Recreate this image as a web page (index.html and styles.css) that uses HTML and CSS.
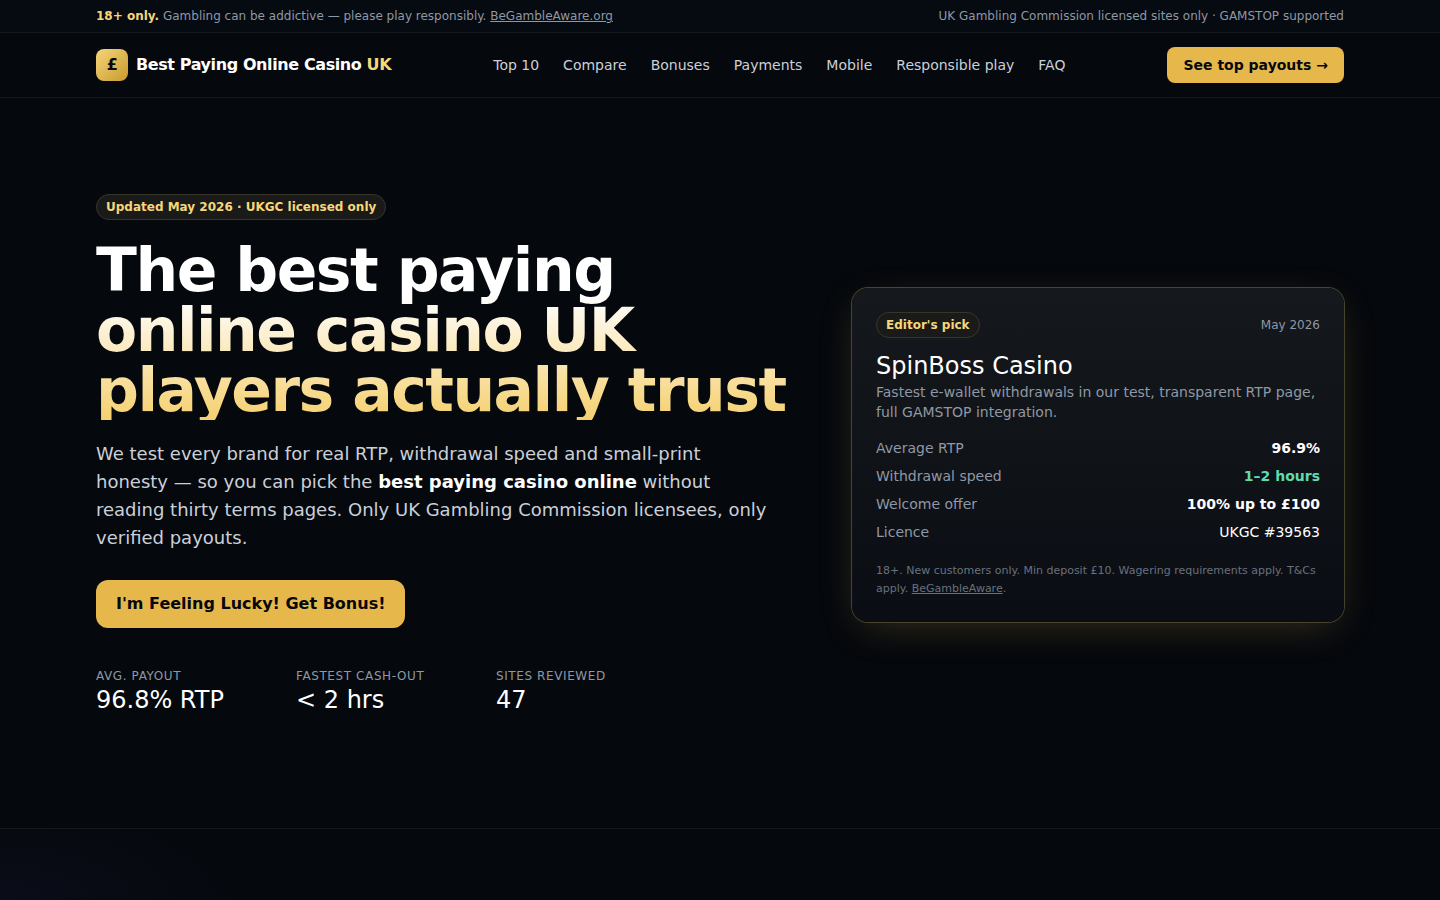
FILE: index.html
```html
<!DOCTYPE html>
<html lang="en-GB">
<head>
<meta charset="utf-8">
<meta name="viewport" content="width=device-width, initial-scale=1">
<title>Best Paying Online Casino UK</title>
<link rel="stylesheet" href="styles.css">
</head>
<body>
<div class="notice">
  <div class="container notice-inner">
    <p><strong>18+ only.</strong> Gambling can be addictive — please play responsibly. <a href="#aware">BeGambleAware.org</a></p>
    <p>UK Gambling Commission licensed sites only · GAMSTOP supported</p>
  </div>
</div>
<header class="header">
  <div class="container header-inner">
    <a class="brand" href="#home"><span class="brand-mark">£</span><span>Best Paying Online Casino <span class="gold">UK</span></span></a>
    <nav class="nav" aria-label="Main">
      <a href="#top">Top 10</a>
      <a href="#compare">Compare</a>
      <a href="#bonuses">Bonuses</a>
      <a href="#payments">Payments</a>
      <a href="#mobile">Mobile</a>
      <a href="#responsible">Responsible play</a>
      <a href="#faq">FAQ</a>
    </nav>
    <a class="button" href="#top">See top payouts →</a>
  </div>
</header>
<main>
  <section class="hero">
    <div class="container hero-grid">
      <div class="hero-copy">
        <span class="badge">Updated May 2026 · UKGC licensed only</span>
        <h1>The best paying online casino UK players actually trust</h1>
        <p class="lead">We test every brand for real RTP, withdrawal speed and small-print honesty — so you can pick the <strong>best paying casino online</strong> without reading thirty terms pages. Only UK Gambling Commission licensees, only verified payouts.</p>
        <a class="button button-large" href="#bonus">I'm Feeling Lucky! Get Bonus!</a>
        <dl class="stats">
          <div><dt>Avg. payout</dt><dd>96.8% RTP</dd></div>
          <div><dt>Fastest cash-out</dt><dd>&lt; 2 hrs</dd></div>
          <div><dt>Sites reviewed</dt><dd>47</dd></div>
        </dl>
      </div>
      <aside class="card">
        <div class="card-top">
          <span class="badge">Editor's pick</span>
          <span class="card-date">May 2026</span>
        </div>
        <h2>SpinBoss Casino</h2>
        <p class="card-text">Fastest e-wallet withdrawals in our test, transparent RTP page, full GAMSTOP integration.</p>
        <dl class="facts">
          <div><dt>Average RTP</dt><dd class="bold">96.9%</dd></div>
          <div><dt>Withdrawal speed</dt><dd class="bold green">1–2 hours</dd></div>
          <div><dt>Welcome offer</dt><dd class="bold">100% up to £100</dd></div>
          <div><dt>Licence</dt><dd>UKGC #39563</dd></div>
        </dl>
        <p class="terms">18+. New customers only. Min deposit £10. Wagering requirements apply. T&amp;Cs apply. <a href="#aware">BeGambleAware</a>.</p>
      </aside>
    </div>
  </section>
  <section class="next" id="top"></section>
</main>
</body>
</html>
```
FILE: styles.css
```css
:root {
  --bg: #05080d;
  --line: #15191f;
  --gold: #e6b84c;
  --gold-light: #f5d77a;
  --muted: #8f98a5;
}

* {
  box-sizing: border-box;
}

body, h1, h2, p, dl, dd {
  margin: 0;
}

body {
  display: flex;
  flex-direction: column;
  min-height: 100vh;
  background: var(--bg);
  color: #fff;
  font: 16px/24px "DejaVu Sans", sans-serif;
}

a {
  color: inherit;
}

.container {
  width: 100%;
  max-width: 1280px;
  margin: 0 auto;
  padding: 0 16px;
}

.notice {
  border-bottom: 1px solid var(--line);
  background: #060a11;
  color: var(--muted);
  font-size: 12px;
  line-height: 16px;
}

.notice-inner {
  display: flex;
  justify-content: space-between;
  gap: 16px;
  padding-top: 8px;
  padding-bottom: 8px;
}

.notice strong, .gold {
  color: var(--gold-light);
}

.header {
  border-bottom: 1px solid var(--line);
}

.header-inner {
  display: flex;
  align-items: center;
  justify-content: space-between;
  min-height: 64px;
}

.brand {
  display: flex;
  align-items: center;
  gap: 8px;
  font-weight: 700;
  letter-spacing: -0.025em;
  text-decoration: none;
}

.brand-mark {
  display: grid;
  place-items: center;
  width: 32px;
  height: 32px;
  border-radius: 8px;
  background: linear-gradient(135deg, #f5d67a, #c99a2e);
  color: #05080d;
}

.nav {
  display: flex;
  gap: 24px;
  color: #cbd0d8;
  font-size: 14px;
  line-height: 20px;
}

.nav a {
  text-decoration: none;
}

.button {
  display: inline-block;
  padding: 8px 16px;
  border-radius: 8px;
  background: var(--gold);
  color: #05080d;
  font-size: 14px;
  font-weight: 700;
  line-height: 20px;
  text-decoration: none;
}

.hero {
  padding: 96px 0 112px;
  border-bottom: 1px solid var(--line);
}

.hero-grid {
  display: grid;
  grid-template-columns: repeat(12, minmax(0, 1fr));
  align-items: center;
  column-gap: 48px;
}

.hero-copy {
  display: flex;
  flex-direction: column;
  align-items: flex-start;
  grid-column: span 7;
}

.badge {
  padding: 4px 9px;
  border: 1px solid #37352a;
  border-radius: 13px;
  background: #1a1a18;
  color: var(--gold-light);
  font-size: 12px;
  font-weight: 700;
  line-height: 16px;
}

h1 {
  margin-top: 20px;
  background: linear-gradient(180deg, #fff 30%, #f5d06f 100%);
  background-clip: text;
  -webkit-background-clip: text;
  color: transparent;
  font-size: 60px;
  font-weight: 700;
  line-height: 60px;
  letter-spacing: -0.025em;
}

.lead {
  max-width: 672px;
  margin-top: 20px;
  color: #cbd0d8;
  font-size: 18px;
  line-height: 28px;
}

.lead strong {
  color: #fff;
}

.button-large {
  margin-top: 28px;
  padding: 12px 20px;
  border-radius: 12px;
  font-size: 16px;
  line-height: 24px;
}

.stats {
  display: grid;
  grid-template-columns: repeat(3, 1fr);
  gap: 24px;
  width: 100%;
  max-width: 576px;
  margin-top: 40px;
}

.stats dt {
  color: var(--muted);
  font-size: 12px;
  line-height: 16px;
  letter-spacing: 0.05em;
  text-transform: uppercase;
}

.stats dd {
  font-size: 24px;
  line-height: 32px;
}

.card {
  grid-column: span 5;
  padding: 24px;
  border-radius: 16px;
  background: linear-gradient(180deg, #15181c, #0a0d13);
  box-shadow: 0 0 0 1px #46432e, 0 10px 40px -10px #e6b84c40;
}

.card-top {
  display: flex;
  align-items: center;
  justify-content: space-between;
}

.card-date {
  color: var(--muted);
  font-size: 12px;
  line-height: 16px;
}

h2 {
  margin-top: 12px;
  font-size: 24px;
  font-weight: 400;
  line-height: 32px;
}

.card-text {
  color: var(--muted);
  font-size: 14px;
  line-height: 20px;
}

.facts {
  display: grid;
  gap: 8px;
  margin-top: 16px;
  font-size: 14px;
  line-height: 20px;
}

.facts div {
  display: flex;
  justify-content: space-between;
}

.facts dt {
  color: var(--muted);
}

.bold {
  font-weight: 700;
}

.green {
  color: #5fdcab;
}

.terms {
  margin-top: 20px;
  color: #69717d;
  font-size: 11px;
  line-height: 18px;
}

main {
  display: flex;
  flex: 1;
  flex-direction: column;
}

.next {
  flex: 1;
  background: radial-gradient(ellipse 240px 100px at 0 100%, #0a0d18, transparent);
}
```
